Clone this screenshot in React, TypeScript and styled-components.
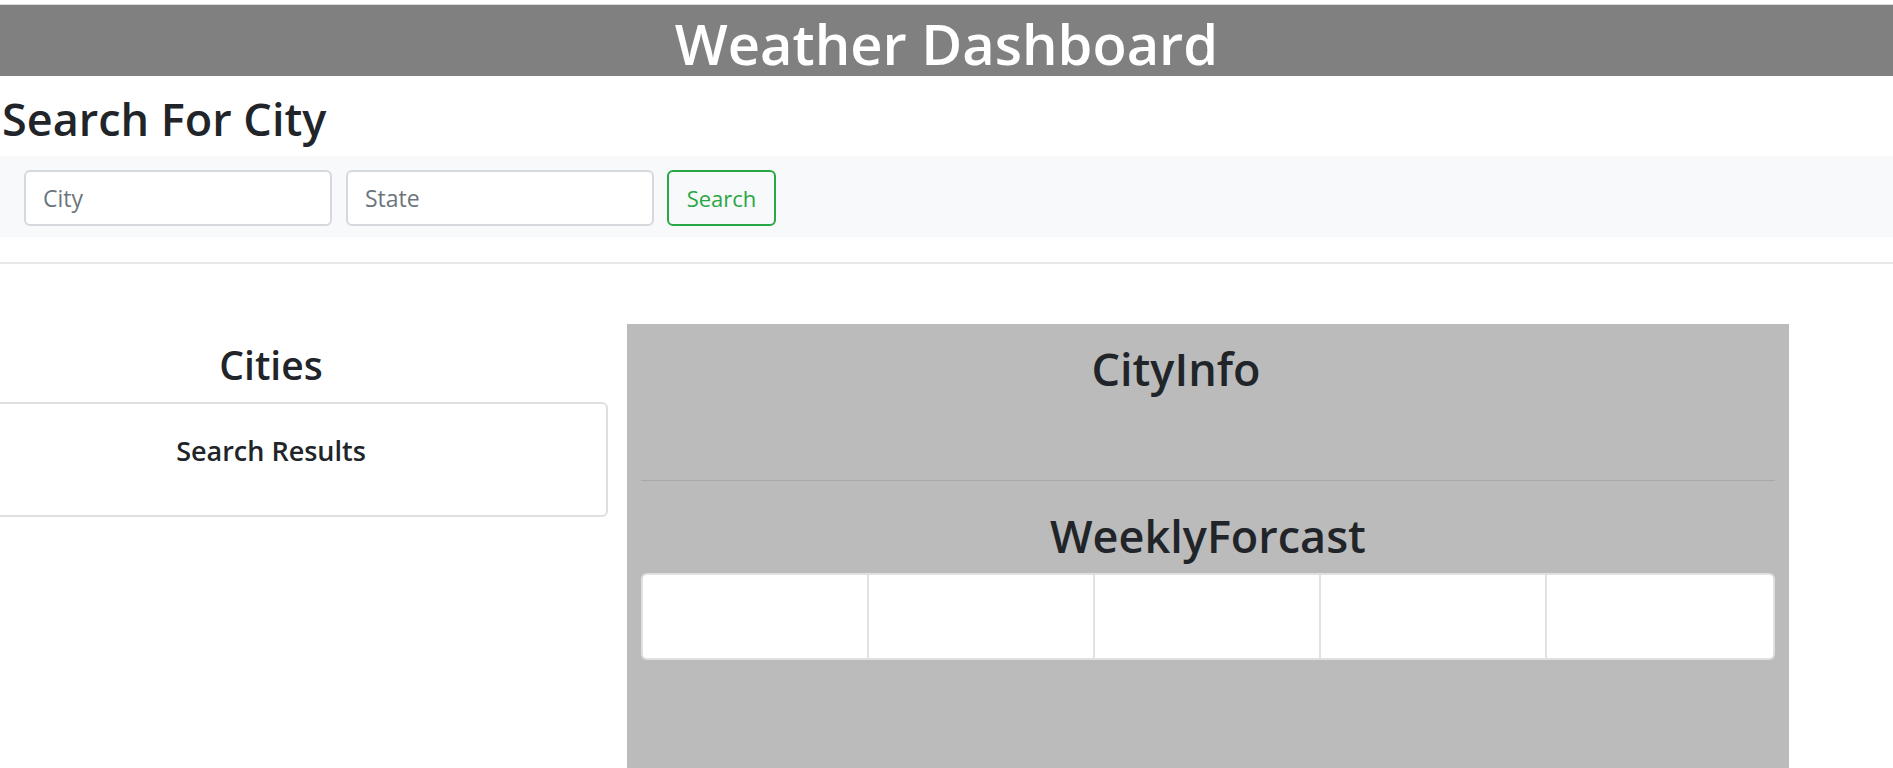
import React from 'react';
import styled, { createGlobalStyle } from 'styled-components';

const GlobalStyle = createGlobalStyle`
  html, body {
    margin: 0;
    padding: 0;
  }
  body {
    font-family: "Open Sans", "Noto Sans", sans-serif;
    color: #212529;
    background: #ffffff;
  }
  * {
    box-sizing: border-box;
  }
`;

const Page = styled.div`
  height: 100vh;
  overflow: hidden;
  display: flex;
  flex-direction: column;
`;

const Header = styled.header`
  margin-top: 4px;
  border-top: 1px solid #dcdcdc;
  height: 72px;
  padding-top: 5px;
  background-color: #808080;
  color: #ffffff;
  text-align: center;
`;

const HeaderTitle = styled.h1`
  margin: 0;
  font-size: 56px;
  font-weight: 600;
  line-height: 66px;
`;

const SectionTitle = styled.h1`
  margin: 16px 0 10px 2px;
  font-size: 45px;
  font-weight: 600;
  line-height: 1.2;
`;

const SearchBar = styled.form`
  display: flex;
  align-items: center;
  gap: 14px;
  padding: 14px 24px 11px;
  background-color: #f8f9fa;
`;

const Input = styled.input`
  width: 308px;
  height: 56px;
  padding: 0 17px;
  border: 2px solid #d5d9de;
  border-radius: 6px;
  background: #ffffff;
  font-family: inherit;
  font-size: 23px;
  color: #495057;

  &::placeholder {
    color: #6c757d;
  }
`;

const SearchButton = styled.button`
  width: 109px;
  height: 56px;
  margin-left: -1px;
  border: 2px solid #28a745;
  border-radius: 6px;
  background: transparent;
  color: #28a745;
  font-family: inherit;
  font-size: 22px;
  cursor: pointer;
`;

const Divider = styled.hr<{ tone?: 'light' | 'dark' }>`
  margin: ${({ tone }) => (tone === 'dark' ? '0' : '25px 0 0')};
  border: 0;
  border-top: ${({ tone }) => (tone === 'dark' ? '1px solid #a8a8a8' : '2px solid #e7e7e7')};
`;

const MainRow = styled.main`
  flex: 1;
  display: grid;
  grid-template-columns: 674px 1162px;
  column-gap: 19px;
  margin: 60px 0 0 -66px;
  min-height: 0;
`;

const CitiesColumn = styled.section`
  display: flex;
  flex-direction: column;
  align-items: stretch;
`;

const ColumnTitle = styled.h2`
  margin: 18px 0 13px;
  text-align: center;
  font-size: 39px;
  font-weight: 600;
  line-height: 1.2;
`;

const ResultsCard = styled.div`
  height: 115px;
  padding-top: 31px;
  border: 2px solid #dfdfdf;
  border-radius: 6px;
  text-align: center;
`;

const CardTitle = styled.h4`
  margin: 0;
  font-size: 27px;
  font-weight: 600;
  line-height: 1.2;
`;

const InfoPanel = styled.section`
  background-color: #bbbbbb;
  padding: 18px 14px 0;
`;

const PanelTitle = styled.h1<{ shift?: number }>`
  margin: 0;
  padding-right: ${({ shift }) => (shift ? `${shift}px` : '0')};
  text-align: center;
  font-size: 45px;
  font-weight: 600;
  line-height: 1.2;
`;

const CityInfoBlock = styled.div`
  padding-bottom: 84px;
`;

const ForecastBlock = styled.div`
  padding-top: 28px;
`;

const ForecastStrip = styled.div`
  display: grid;
  grid-template-columns: repeat(5, 1fr);
  height: 87px;
  margin-top: 10px;
  border: 2px solid #e0e0e0;
  border-radius: 6px;
  background-color: #ffffff;
  overflow: hidden;
`;

const ForecastDay = styled.div<{ last?: boolean }>`
  border-right: ${({ last }) => (last ? 'none' : '2px solid #e2e2e2')};
`;

const days = ['mon', 'tue', 'wed', 'thu', 'fri'];

export default function App() {
  return (
    <Page>
      <GlobalStyle />
      <Header>
        <HeaderTitle>Weather Dashboard</HeaderTitle>
      </Header>

      <SectionTitle>Search For City</SectionTitle>
      <SearchBar onSubmit={(e) => e.preventDefault()}>
        <Input type="text" placeholder="City" />
        <Input type="text" placeholder="State" />
        <SearchButton type="submit">Search</SearchButton>
      </SearchBar>
      <Divider />

      <MainRow>
        <CitiesColumn>
          <ColumnTitle>Cities</ColumnTitle>
          <ResultsCard>
            <CardTitle>Search Results</CardTitle>
          </ResultsCard>
        </CitiesColumn>

        <InfoPanel>
          <CityInfoBlock>
            <PanelTitle shift={64}>CityInfo</PanelTitle>
          </CityInfoBlock>
          <Divider tone="dark" />
          <ForecastBlock>
            <PanelTitle>WeeklyForcast</PanelTitle>
            <ForecastStrip>
              {days.map((d, i) => (
                <ForecastDay key={d} last={i === days.length - 1} />
              ))}
            </ForecastStrip>
          </ForecastBlock>
        </InfoPanel>
      </MainRow>
    </Page>
  );
}
